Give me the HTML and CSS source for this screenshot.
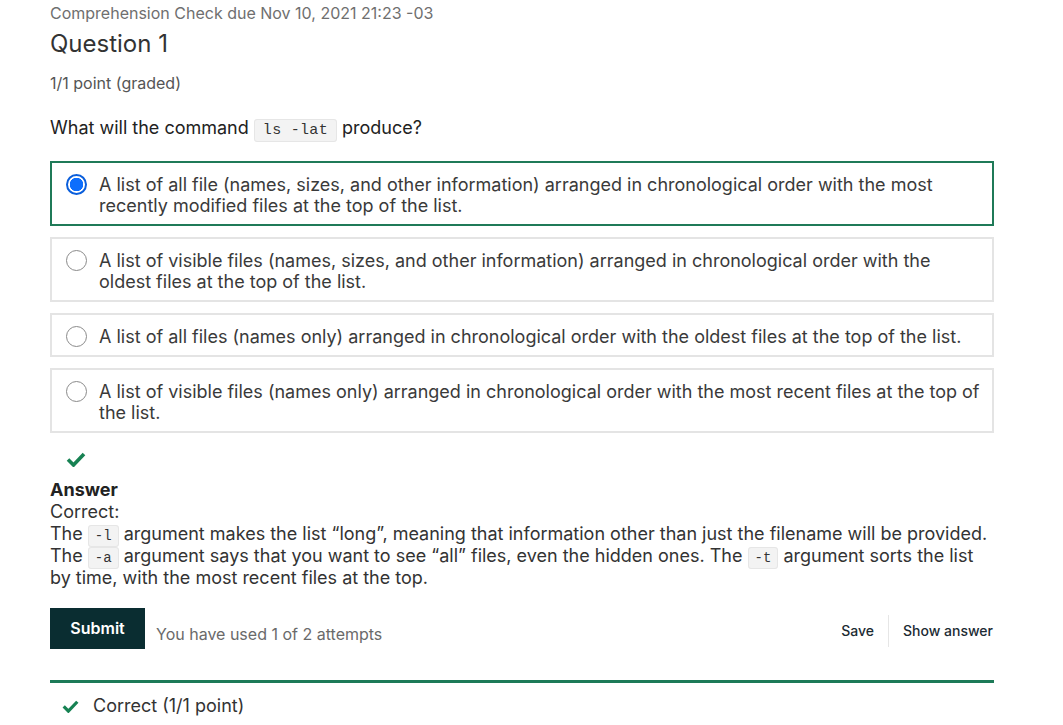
FILE: index.html
```html
<!DOCTYPE html>
<html>
<head>
<meta charset="utf-8">
<link rel="stylesheet" href="styles.css">
</head>
<body>
<div class="page">
  <div class="due">Comprehension Check due Nov 10, 2021 21:23 -03</div>
  <h2 class="title">Question 1</h2>
  <div class="points">1/1 point (graded)</div>
  <p class="prompt">What will the command <code>ls -lat</code> produce?</p>
  <div class="options">
    <label class="option selected">
      <span class="radio on"></span>
      <span class="opt-text">A list of all file (names, sizes, and other information) arranged in chronological order with the most recently modified files at the top of the list.</span>
    </label>
    <label class="option">
      <span class="radio"></span>
      <span class="opt-text">A list of visible files (names, sizes, and other information) arranged in chronological order with the oldest files at the top of the list.</span>
    </label>
    <label class="option">
      <span class="radio"></span>
      <span class="opt-text">A list of all files (names only) arranged in chronological order with the oldest files at the top of the list.</span>
    </label>
    <label class="option">
      <span class="radio"></span>
      <span class="opt-text">A list of visible files (names only) arranged in chronological order with the most recent files at the top of the list.</span>
    </label>
  </div>
  <div class="status-check">
    <svg width="20" height="16" viewBox="0 0 20 16"><path d="M2 8.5 L7.5 14 L18 3" fill="none" stroke="#178253" stroke-width="3.6"/></svg>
  </div>
  <div class="answer">
    <div class="answer-title">Answer</div>
    <div>Correct:</div>
    <div>The <code>-l</code> argument makes the list “long”, meaning that information other than just the filename will be provided. The <code>-a</code> argument says that you want to see “all” files, even the hidden ones. The <code>-t</code> argument sorts the list by time, with the most recent files at the top.</div>
  </div>
  <div class="actions">
    <div class="left">
      <button class="submit">Submit</button>
      <span class="attempts">You have used 1 of 2 attempts</span>
    </div>
    <div class="right">
      <span class="link">Save</span>
      <span class="sep"></span>
      <span class="link">Show answer</span>
    </div>
  </div>
  <div class="notice">
    <svg width="17" height="14" viewBox="0 0 20 16"><path d="M2 8.5 L7.5 14 L18 3" fill="none" stroke="#178253" stroke-width="3.8"/></svg>
    <span>Correct (1/1 point)</span>
  </div>
</div>
</body>
</html>
```
FILE: styles.css
```css
* { box-sizing: border-box; }
body {
  margin: 0;
  background: #fff;
  font-family: Inter, "Noto Sans", sans-serif;
  color: #2d2d2d;
}
.page {
  width: 944px;
  margin-left: 50px;
  padding-top: 4px;
}
.due {
  font-size: 16px;
  color: #6f6f6f;
  line-height: 18px;
}
.title {
  margin: 8px 0 0;
  font-size: 24px;
  font-weight: 400;
  line-height: 28px;
  color: #333;
}
.points {
  margin-top: 15px;
  font-size: 16px;
  line-height: 20px;
  color: #555;
}
.prompt {
  margin: 24px 0 0;
  font-size: 18px;
  line-height: 22px;
  color: #222;
}
code {
  font-family: "Liberation Mono", "DejaVu Sans Mono", monospace;
  font-size: 15px;
  line-height: 1;
  background: #f3f3f3;
  border: 1px solid #e6e6e6;
  border-radius: 3px;
  padding: 2px 8px;
  color: #333;
  white-space: nowrap;
  letter-spacing: 0.3px;
}
.options {
  margin-top: 22px;
  display: flex;
  flex-direction: column;
  gap: 11px;
}
.option {
  display: flex;
  align-items: flex-start;
  gap: 12px;
  border: 2px solid #e4e4e4;
  padding: 11px 12px 8px 14px;
  font-size: 18px;
  line-height: 21px;
  color: #3a3a3a;
}
.option.selected {
  border-color: #1f7a58;
}
.radio {
  flex: none;
  width: 21px;
  height: 21px;
  border-radius: 50%;
  border: 1.5px solid #8a8a8a;
  background: #fff;
}
.radio.on {
  border: 2px solid #0a5edb;
  background: radial-gradient(circle, #0d6efd 0 6.5px, #fff 7px);
}
.status-check {
  margin-top: 18px;
  padding-left: 16px;
  height: 16px;
}
.answer {
  margin-top: 12px;
  font-size: 18px;
  line-height: 22px;
  color: #333;
}
.answer-title {
  font-weight: 700;
  color: #222;
}
.answer code { font-size: 14px; padding: 2px 6px; letter-spacing: 0; }
.actions {
  margin-top: 19px;
  display: flex;
  justify-content: space-between;
  align-items: center;
}
.left { display: flex; align-items: center; gap: 11px; }
.submit {
  background: #0a2d31;
  color: #fff;
  border: none;
  font-family: Inter, sans-serif;
  font-size: 16px;
  font-weight: 600;
  width: 95px;
  height: 41px;
  padding: 0 0 2px;
}
.attempts {
  font-size: 16px;
  color: #6a6a6a;
  padding-top: 10px;
}
.right {
  display: flex;
  align-items: center;
  gap: 14px;
  font-size: 14px;
  font-weight: 500;
  color: #1c2b33;
  padding: 4px 1px 0 0;
}
.sep { width: 1px; height: 32px; background: #e6e6e6; }
.notice {
  margin-top: 31px;
  border-top: 3px solid #1d7a58;
  display: flex;
  align-items: center;
  gap: 14px;
  padding: 12px 0 0 12px;
  font-size: 18px;
  color: #333;
}
```
